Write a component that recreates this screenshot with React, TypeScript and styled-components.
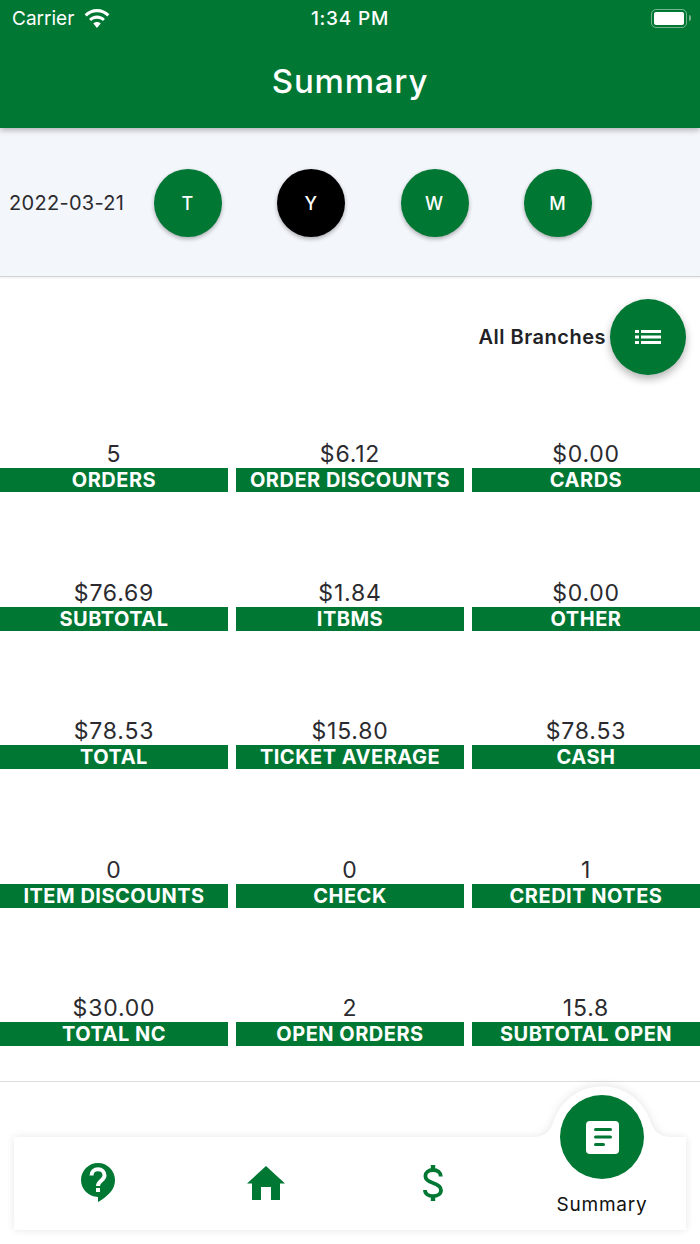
import { FC } from "react";
import styled, { createGlobalStyle } from "styled-components";

const GREEN = "#007733";

const stats = [
  { value: "5", label: "ORDERS" },
  { value: "$6.12", label: "ORDER DISCOUNTS" },
  { value: "$0.00", label: "CARDS" },
  { value: "$76.69", label: "SUBTOTAL" },
  { value: "$1.84", label: "ITBMS" },
  { value: "$0.00", label: "OTHER" },
  { value: "$78.53", label: "TOTAL" },
  { value: "$15.80", label: "TICKET AVERAGE" },
  { value: "$78.53", label: "CASH" },
  { value: "0", label: "ITEM DISCOUNTS" },
  { value: "0", label: "CHECK" },
  { value: "1", label: "CREDIT NOTES" },
  { value: "$30.00", label: "TOTAL NC" },
  { value: "2", label: "OPEN ORDERS" },
  { value: "15.8", label: "SUBTOTAL OPEN" },
];

const periods = ["T", "Y", "W", "M"];

const WifiIcon: FC = () => (
  <svg width="26" height="19" viewBox="1.500 0 23 17.500">
    <path
      fill="#fff"
      d="M13 3c3.700 0 7 1.400 9.500 3.800l1.900-2C21.400 1.900 17.400 0 13 0S4.600 1.900 1.600 4.800l1.900 2C6 4.400 9.300 3 13 3zM13 9c2.100 0 4 .8 5.400 2.100l1.900-2C18.400 7.200 15.800 6 13 6S7.600 7.200 5.700 9.100l1.900 2C9 9.800 10.900 9 13 9zM13 12c-1.300 0-2.500.5-3.400 1.400L13 17.500l3.400-4.100C15.500 12.500 14.300 12 13 12z"
    />
  </svg>
);

const BatteryIcon: FC = () => (
  <BatteryWrap>
    <BatteryBody>
      <BatteryFill />
    </BatteryBody>
    <BatteryCap />
  </BatteryWrap>
);

const ListIcon: FC = () => (
  <svg width="26" height="18" viewBox="0 0 26 18" fill="#fff">
    <rect x="0" y="2" width="4" height="3" />
    <rect x="6" y="2" width="20" height="3" />
    <rect x="0" y="7.500" width="4" height="3" />
    <rect x="6" y="7.500" width="20" height="3" />
    <rect x="0" y="13" width="4" height="3" />
    <rect x="6" y="13" width="20" height="3" />
  </svg>
);

const HelpIcon: FC = () => (
  <svg width="36" height="42" viewBox="0 0 36 42">
    <path
      fill={GREEN}
      d="M18 1C8.600 1 1 8.600 1 18c0 9.200 7.200 16.500 17 17v5c3-1.500 6-3.800 8.500-6C32 29.500 35 24.500 35 18 35 8.600 27.400 1 18 1z"
    />
    <path
      fill="none"
      stroke="#fff"
      strokeWidth="4"
      d="M11.500 13.500c0-3.600 2.900-6.300 6.500-6.300s6.500 2.700 6.500 6.300c0 5-6.500 5-6.500 10.500"
    />
    <rect x="16" y="26" width="4" height="4" fill="#fff" />
  </svg>
);

const HomeIcon: FC = () => (
  <svg width="38" height="34" viewBox="0 0 38 34">
    <path fill={GREEN} d="M19 0 0 17.500h5V34h9V21h10v13h9V17.500h5z" />
  </svg>
);

const DollarIcon: FC = () => (
  <svg width="20" height="36" viewBox="0 0 20 36">
    <rect x="7.800" y="0" width="4.400" height="6" fill={GREEN} />
    <rect x="7.800" y="30" width="4.400" height="6" fill={GREEN} />
    <path
      fill="none"
      stroke={GREEN}
      strokeWidth="3.800"
      d="M17.800 11.500C17.800 7.500 14.500 5 10 5S2.400 7.500 2.400 11c0 4 3.200 5.600 7.600 7s8 3 8 7.200c0 3.700-3.500 5.900-8 5.900S2 28.800 2 25"
    />
  </svg>
);

const NoteIcon: FC = () => (
  <svg width="33" height="33" viewBox="0 0 33 33">
    <rect width="33" height="33" rx="4" fill="#fff" />
    <rect x="8" y="7" width="18" height="3" rx="1.500" fill={GREEN} />
    <rect x="8" y="14.500" width="18" height="3" rx="1.500" fill={GREEN} />
    <rect x="8" y="22" width="11" height="3" rx="1.500" fill={GREEN} />
  </svg>
);

const NotchShape: FC = () => (
  <NotchSvg width="160" height="60" viewBox="0 0 160 60">
    <path
      fill="#fff"
      d="M0 60h11c11 0 17-6 20-14A51 51 0 0 1 129 46c3 8 9 14 20 14h11z"
    />
  </NotchSvg>
);

const App: FC = () => (
  <Page>
    <GlobalStyle />
    <Header>
      <StatusBar>
        <Carrier>
          Carrier
          <WifiIcon />
        </Carrier>
        <Clock>1:34 PM</Clock>
        <BatteryIcon />
      </StatusBar>
      <Title>Summary</Title>
    </Header>

    <DatePanel>
      <DateText>2022-03-21</DateText>
      <Periods>
        {periods.map((period) => (
          <Period key={period} $active={period === "Y"}>
            {period}
          </Period>
        ))}
      </Periods>
    </DatePanel>

    <BranchRow>
      <BranchName>All Branches</BranchName>
      <Fab>
        <ListIcon />
      </Fab>
    </BranchRow>

    <Stats>
      {stats.map((stat) => (
        <Stat key={stat.label}>
          <StatValue>{stat.value}</StatValue>
          <StatLabel>{stat.label}</StatLabel>
        </Stat>
      ))}
    </Stats>

    <Footer>
      <TabBar>
        <Tab>
          <HelpIcon />
        </Tab>
        <Tab>
          <HomeIcon />
        </Tab>
        <Tab>
          <DollarIcon />
        </Tab>
        <ActiveTab>
          <NotchShape />
          <ActiveCircle>
            <NoteIcon />
          </ActiveCircle>
          <ActiveLabel>Summary</ActiveLabel>
        </ActiveTab>
      </TabBar>
    </Footer>
  </Page>
);

export default App;

const GlobalStyle = createGlobalStyle`
  html, body {
    margin: 0;
    padding: 0;
    background: #fff;
  }
  body {
    font-family: Inter, "Liberation Sans", sans-serif;
  }
`;

const Page = styled.div`
  width: 700px;
  height: 1244px;
  overflow: hidden;
  display: flex;
  flex-direction: column;
  background: #fff;
`;

const Header = styled.header`
  position: relative;
  z-index: 2;
  height: 128px;
  flex: none;
  background: ${GREEN};
  color: #fff;
  box-shadow: 0 2px 6px rgba(0, 0, 0, 0.3);
`;

const StatusBar = styled.div`
  height: 36px;
  padding: 0 12px;
  display: grid;
  grid-template-columns: 1fr auto 1fr;
  align-items: center;
  font-size: 19px;
`;

const Carrier = styled.div`
  display: flex;
  align-items: center;
  gap: 10px;
`;

const Clock = styled.div`
  font-weight: 500;
  letter-spacing: 0.8px;
`;

const BatteryWrap = styled.div`
  justify-self: end;
  margin-right: -3px;
  display: flex;
  align-items: center;
  gap: 2px;
`;

const BatteryBody = styled.div`
  width: 36px;
  height: 19px;
  box-sizing: border-box;
  padding: 2px;
  border: 1.500px solid rgba(255, 255, 255, 0.45);
  border-radius: 5px;
`;

const BatteryFill = styled.div`
  height: 100%;
  background: #fff;
  border-radius: 2px;
`;

const BatteryCap = styled.div`
  width: 2px;
  height: 6px;
  background: rgba(255, 255, 255, 0.45);
  border-radius: 0 2px 2px 0;
`;

const Title = styled.h1`
  margin: 0;
  height: 92px;
  padding-bottom: 2px;
  box-sizing: border-box;
  display: flex;
  align-items: center;
  justify-content: center;
  font-size: 33px;
  font-weight: 500;
  letter-spacing: 0.8px;
`;

const DatePanel = styled.section`
  height: 149px;
  flex: none;
  box-sizing: border-box;
  padding: 2px 0 0 9px;
  display: flex;
  align-items: center;
  background: #f3f6fb;
  border-bottom: 1px solid #d2d3d6;
  box-shadow: 0 1px 2px rgba(0, 0, 0, 0.08);
`;

const DateText = styled.div`
  width: 145px;
  font-size: 20px;
  letter-spacing: 0.3px;
  color: #2b2b2f;
`;

const Periods = styled.div`
  display: flex;
  gap: 55.300px;
`;

const Period = styled.div<{ $active: boolean }>`
  width: 68px;
  height: 68px;
  border-radius: 50%;
  display: flex;
  align-items: center;
  justify-content: center;
  padding-right: 1px;
  box-sizing: border-box;
  background: ${({ $active }) => ($active ? "#000" : GREEN)};
  color: #fff;
  font-size: 18px;
  font-weight: 500;
  box-shadow: 0 2px 4px rgba(0, 0, 0, 0.3);
`;

const BranchRow = styled.div`
  height: 76px;
  margin-top: 22px;
  padding-right: 14px;
  flex: none;
  display: flex;
  align-items: center;
  justify-content: flex-end;
  gap: 4px;
`;

const BranchName = styled.div`
  font-size: 20px;
  font-weight: 600;
  letter-spacing: 0.5px;
  color: #222226;
`;

const Fab = styled.div`
  width: 76px;
  height: 76px;
  border-radius: 50%;
  display: flex;
  align-items: center;
  justify-content: center;
  background: ${GREEN};
  box-shadow: 0 4px 9px rgba(0, 0, 0, 0.3);
`;

const Stats = styled.div`
  margin-top: 63px;
  display: grid;
  grid-template-columns: repeat(3, 228px);
  column-gap: 8px;
  row-gap: 84.500px;
`;

const Stat = styled.div`
  height: 54px;
  display: flex;
  flex-direction: column;
  align-items: stretch;
`;

const StatValue = styled.div`
  height: 30px;
  line-height: 32px;
  text-align: center;
  font-size: 23px;
  letter-spacing: 0.8px;
  color: #2b2b2f;
`;

const StatLabel = styled.div`
  height: 24px;
  line-height: 24px;
  text-align: center;
  background: ${GREEN};
  color: #fff;
  font-size: 20px;
  font-weight: 700;
  letter-spacing: 0.5px;
  white-space: nowrap;
`;

const Footer = styled.footer`
  margin-top: 35px;
  height: 163px;
  flex: none;
  box-sizing: border-box;
  padding: 55px 14px 14px;
  border-top: 1px solid #dcdcdc;
`;

const TabBar = styled.nav`
  position: relative;
  height: 93px;
  display: grid;
  grid-template-columns: 167px 170px 164px 171px;
  background: #fff;
  box-shadow: 0 0 8px rgba(0, 0, 0, 0.1);
`;

const Tab = styled.div`
  display: flex;
  align-items: center;
  justify-content: center;
  padding-bottom: 1px;
`;

const ActiveTab = styled.div`
  position: relative;
  margin-left: 3px;
  display: flex;
  justify-content: center;
`;

const NotchSvg = styled.svg`
  position: absolute;
  top: -60px;
  left: 50%;
  margin-left: -80px;
  overflow: visible;
  filter: drop-shadow(0 -1px 4px rgba(0, 0, 0, 0.1));
  clip-path: inset(-12px -12px 0 -12px);
`;

const ActiveCircle = styled.div`
  position: absolute;
  top: -42px;
  width: 84px;
  height: 84px;
  border-radius: 50%;
  display: flex;
  align-items: center;
  justify-content: center;
  background: ${GREEN};
`;

const ActiveLabel = styled.div`
  position: absolute;
  top: 56px;
  font-size: 19px;
  letter-spacing: 0.8px;
  color: #111;
`;
